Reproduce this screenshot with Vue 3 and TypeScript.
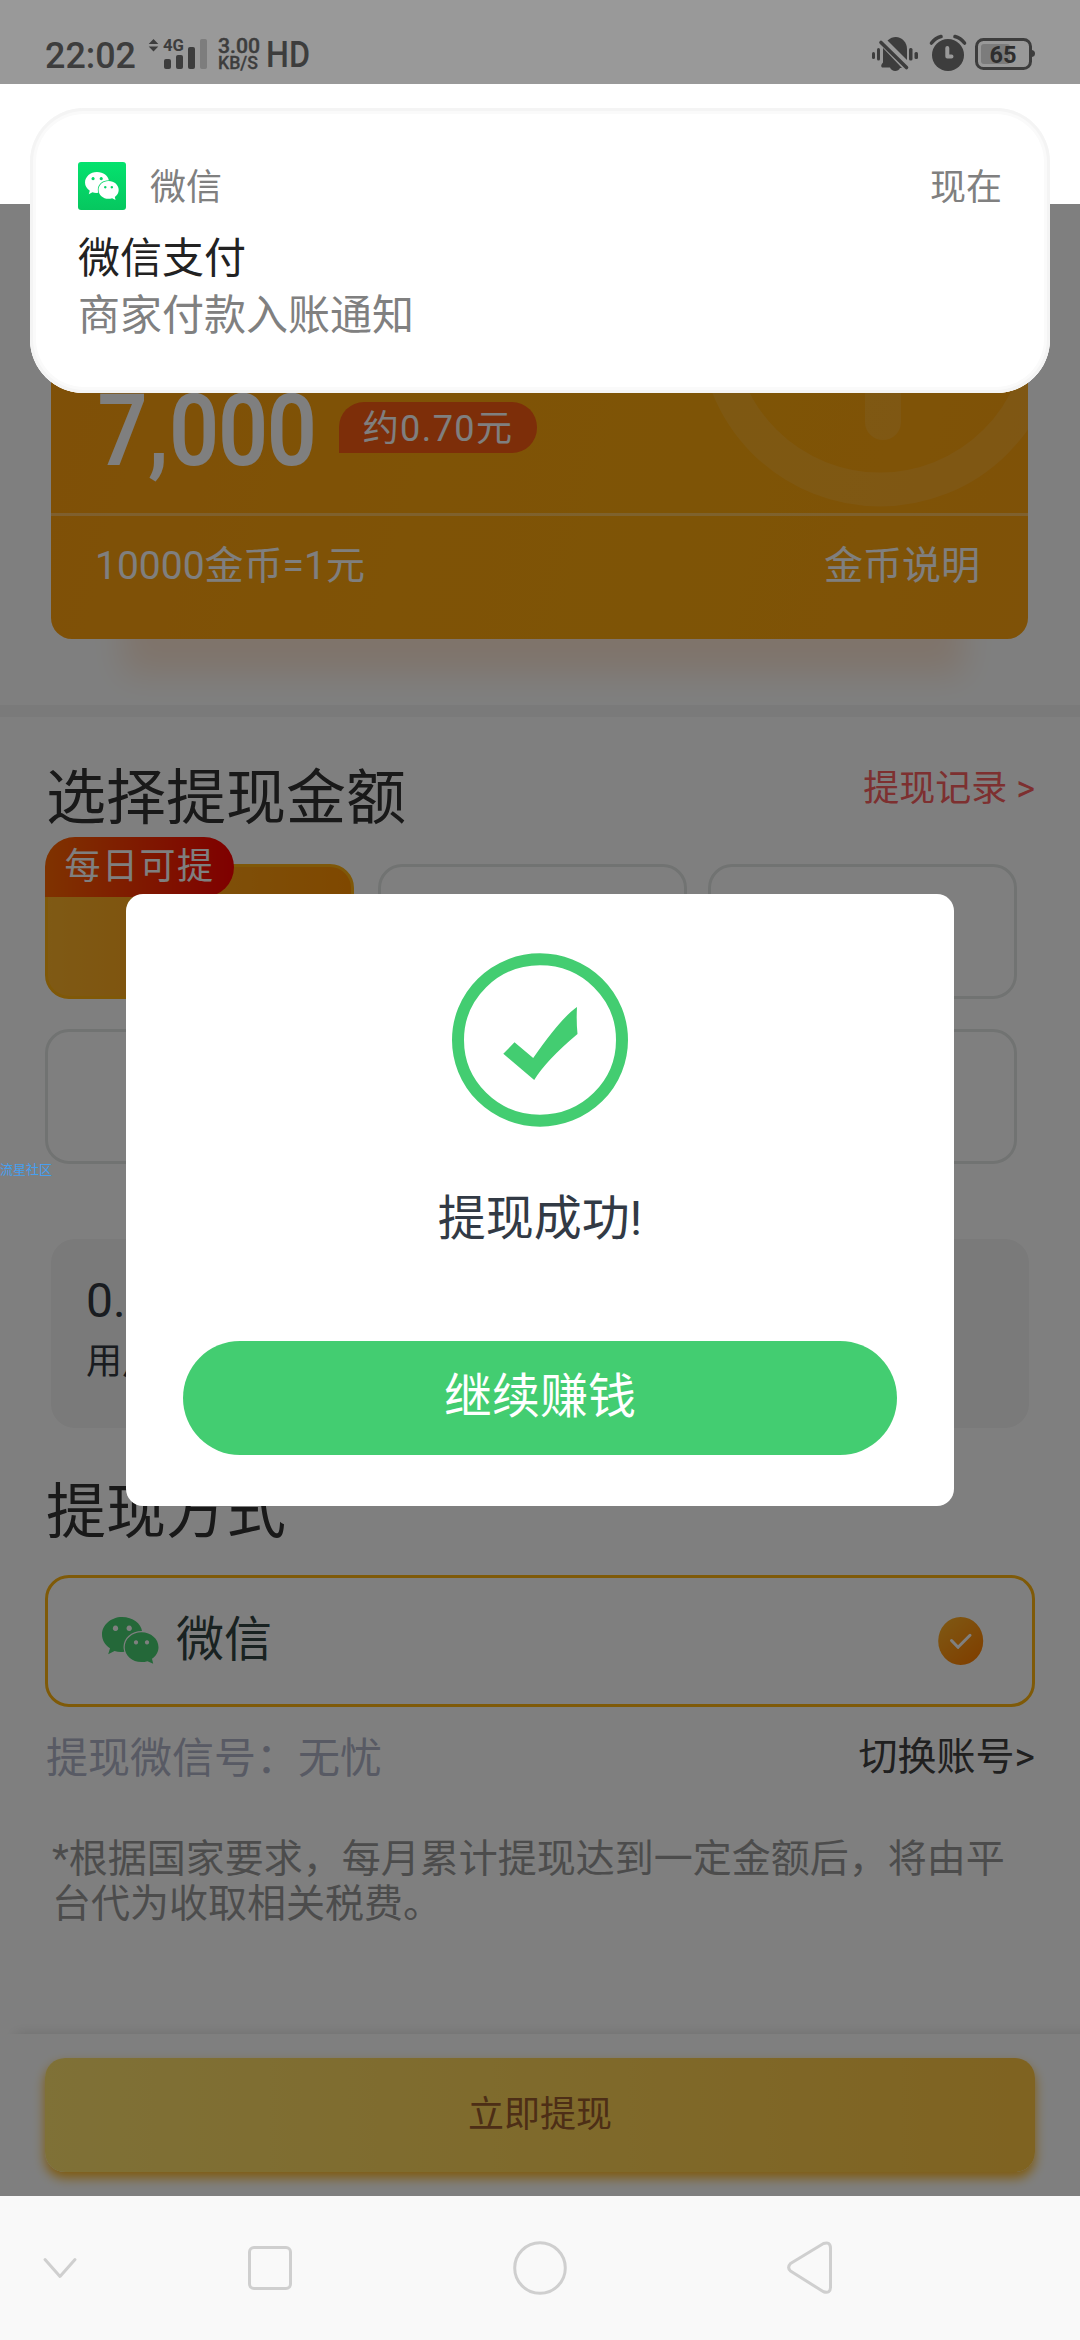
<script setup lang="ts">
import { ref } from 'vue'

interface AmountOption {
  id: number
  tag?: string
}

const amounts: AmountOption[] = [
  { id: 1, tag: '每日可提' },
  { id: 2 },
  { id: 3 },
  { id: 4 },
  { id: 5 },
  { id: 6 },
]
const selected = ref(1)
const dialogOpen = ref(true)
</script>

<template>
  <div class="screen">
    <header class="status">
      <svg class="status-left" width="280" height="44" viewBox="40 32 280 44">
        <g fill="#3d3d3d">
          <text x="45" y="67.500" font-size="36" font-weight="500" textLength="91" lengthAdjust="spacingAndGlyphs">22:02</text>
          <path d="M153.500 39l4.800 5h-9.600zM153.500 51.500l4.800-5h-9.600z" />
          <text x="163" y="51" font-size="17" font-weight="700" textLength="21" lengthAdjust="spacingAndGlyphs">4G</text>
          <rect x="164" y="59" width="7" height="10" rx="2" />
          <rect x="176" y="55" width="7" height="14" rx="2" />
          <rect x="188" y="47" width="7" height="22" rx="2" />
          <rect x="200" y="39" width="7" height="30" rx="2" fill="#7d7d7d" />
          <text x="218" y="53" font-size="20.500" font-weight="500" stroke="#3d3d3d" stroke-width=".4" textLength="42" lengthAdjust="spacingAndGlyphs">3.00</text>
          <text x="218" y="69" font-size="17.500" font-weight="500" stroke="#3d3d3d" stroke-width=".3" textLength="40" lengthAdjust="spacingAndGlyphs">KB/S</text>
          <text x="266" y="67" font-size="36" font-weight="500" textLength="44" lengthAdjust="spacingAndGlyphs">HD</text>
        </g>
      </svg>
      <svg class="status-right" width="170" height="44" viewBox="868 32 170 44">
        <g fill="#3d3d3d">
          <rect x="872" y="52" width="3" height="7" rx="1.500" />
          <rect x="877" y="48" width="3" height="12.500" rx="1.500" />
          <rect x="909" y="48" width="3.500" height="12.500" rx="1.500" />
          <rect x="914.500" y="52" width="3.500" height="7" rx="1.500" />
          <path d="M883 48L902 68H900C898.500 72 891.500 72 890 67.500H882Q880 65.500 883 62.500Z" />
          <path d="M887.500 40.500C896 32.500 907 39 907 49V60Z" />
          <path d="M881 42.500L906.500 67.500" stroke="#3d3d3d" stroke-width="3.600" stroke-linecap="round" />
          <circle cx="948" cy="55" r="16" />
          <path d="M931.500 43Q935.500 38 941 36.600M964.500 43Q960.500 38 955 36.600" fill="none" stroke="#3d3d3d" stroke-width="3.600" stroke-linecap="round" />
          <path d="M947.300 48V56.500H951.500" fill="none" stroke="#999" stroke-width="4" stroke-linecap="round" stroke-linejoin="round" />
          <rect x="976.500" y="39.500" width="54" height="29" rx="7" fill="none" stroke="#3d3d3d" stroke-width="3" />
          <path d="M1032 50Q1035 50.500 1035 53.500T1032 57Z" />
          <rect x="981" y="44" width="29" height="20" rx="3" fill="#7c7c7c" />
          <text x="989.500" y="62.500" font-size="24" font-weight="700" textLength="27" lengthAdjust="spacingAndGlyphs" fill="#2e2e2e">65</text>
        </g>
      </svg>
    </header>
    <div class="titlebar"></div>

    <main class="page">
      <section class="balance">
        <svg class="emblem" width="332" height="362" viewBox="0 0 332 362">
          <circle cx="184" cy="181" r="163.500" fill="none" stroke="#fff" stroke-opacity=".1" stroke-width="34" />
          <rect x="169" y="80" width="36" height="215" rx="18" fill="#fff" fill-opacity=".1" />
        </svg>
        <div class="balance-top">
          <svg class="coins" width="244" height="100" viewBox="0 0 244 100">
            <g transform="scale(.87 1)">
              <text x="3 61 85 141.500 197.500" y="85" font-size="101" font-weight="600" fill="#fff">7,000</text>
            </g>
          </svg>
          <span class="approx">约0.70元</span>
        </div>
        <div class="balance-foot">
          <span>10000金币=1元</span>
          <span>金币说明</span>
        </div>
      </section>

      <div class="divider"></div>

      <section class="amounts">
        <div class="row-head">
          <h2>选择提现金额</h2>
          <a class="records">提现记录 &gt;</a>
        </div>
        <div class="grid">
          <div v-for="a in amounts" :key="a.id" class="cell" :class="{ active: a.id === selected }">
            <span v-if="a.tag" class="tag">{{ a.tag }}</span>
          </div>
        </div>
      </section>

      <section class="info">
        <p class="info-sum">0.</p>
        <p class="info-who">用户</p>
      </section>

      <h2 class="method-title">提现方式</h2>
      <section class="method">
        <svg class="wechat" width="57" height="47" viewBox="0 0 57 47">
          <path fill="#48d072" fill-rule="evenodd" d="M20 0C31 0 39 6.500 40 14C29 14 21.500 21 21.500 30Q21.500 32.500 22.300 34.800Q17 35.600 12.500 33.900L6.200 37.300L8 31.300C3 28 0 23 0 17.500C0 8 9 0 20 0ZM13.500 8.600a2.700 2.700 0 1 0 .01 0ZM27.200 8.600a2.700 2.700 0 1 0 .01 0Z" />
          <path fill="#48d072" fill-rule="evenodd" d="M39.500 15.300C49 15.300 56.500 22 56.500 30.200C56.500 35 54 39 50 41.800L51.200 46.800L45.500 44.200Q42.500 45.100 39.500 45.100C30 45.100 22.700 38.500 22.700 30.200C22.700 22 30 15.300 39.500 15.300ZM34 23.300a2.100 2.100 0 1 0 .01 0ZM45 23.300a2.100 2.100 0 1 0 .01 0Z" />
        </svg>
        <span class="method-name">微信</span>
        <svg class="picked" width="46" height="48" viewBox="0 0 46 48">
          <defs>
            <linearGradient id="pick" x1="0" y1="0" x2=".8" y2="1">
              <stop offset="0" stop-color="#ffb429" />
              <stop offset="1" stop-color="#ff7e00" />
            </linearGradient>
          </defs>
          <ellipse cx="22.700" cy="24" rx="22.500" ry="24" fill="url(#pick)" />
          <path d="M13.500 23.500L20 30.300L32 18.300" fill="none" stroke="#fff" stroke-width="3" stroke-linecap="round" stroke-linejoin="round" />
        </svg>
      </section>
      <div class="account">
        <span class="account-name">提现微信号：无忧</span>
        <span class="account-switch">切换账号&gt;</span>
      </div>
      <p class="note">*根据国家要求，每月累计提现达到一定金额后，将由平<br />台代为收取相关税费。</p>

      <footer class="submit-bar">
        <button class="submit">立即提现</button>
      </footer>

      <div v-if="dialogOpen" class="mask">
        <div class="dialog">
          <svg class="success" width="176" height="174" viewBox="0 0 176 174">
            <ellipse cx="88" cy="87" rx="82" ry="80.700" fill="none" stroke="#43cd71" stroke-width="12" />
            <path fill="#43cd71" d="M62.500 89.300L51.300 100.700L82.200 127Q94 107.500 125.500 81Q124.200 67.500 125 54Q109 65 81.200 105Z" />
          </svg>
          <p class="dialog-text">提现成功!</p>
          <button class="dialog-btn">继续赚钱</button>
        </div>
      </div>
      <span class="stamp">流星社区</span>
    </main>

    <nav class="nav">
      <span class="nav-side"><svg width="36" height="22" viewBox="0 0 36 22"><path d="M3 2.500L18 19.500L33 2.500" /></svg></span>
      <span class="nav-wide"><svg width="44" height="44" viewBox="0 0 44 44"><rect x="1.500" y="1.500" width="41" height="41" rx="4.500" /></svg></span>
      <span class="nav-mid"><svg width="54" height="54" viewBox="0 0 54 54"><circle cx="27" cy="27" r="25.300" /></svg></span>
      <span class="nav-wide"><svg width="46" height="54" viewBox="0 0 46 54"><path d="M36.500 2.500L3.500 22.500Q-.2 26.500 3.500 30L36.500 50.800Q43.300 53 43.500 46.500V7Q43.300 .2 36.500 2.500Z" /></svg></span>
    </nav>

    <aside class="notice">
      <div class="notice-head">
        <span class="notice-icon">
          <svg width="34" height="28" viewBox="0 0 57 47">
            <path fill="#fff" fill-rule="evenodd" d="M20 0C31 0 39 6.500 40 14C29 14 21.500 21 21.500 30Q21.500 32.500 22.300 34.800Q17 35.600 12.500 33.900L6.200 37.300L8 31.300C3 28 0 23 0 17.500C0 8 9 0 20 0ZM13.500 8.600a2.700 2.700 0 1 0 .01 0ZM27.200 8.600a2.700 2.700 0 1 0 .01 0Z" />
            <path fill="#fff" fill-rule="evenodd" d="M39.500 15.300C49 15.300 56.500 22 56.500 30.200C56.500 35 54 39 50 41.800L51.200 46.800L45.500 44.200Q42.500 45.100 39.500 45.100C30 45.100 22.700 38.500 22.700 30.200C22.700 22 30 15.300 39.500 15.300ZM34 23.300a2.100 2.100 0 1 0 .01 0ZM45 23.300a2.100 2.100 0 1 0 .01 0Z" />
          </svg>
        </span>
        <span class="notice-app">微信</span>
        <span class="notice-time">现在</span>
      </div>
      <p class="notice-title">微信支付</p>
      <p class="notice-body">商家付款入账通知</p>
    </aside>
  </div>
</template>

<style>
body {
  margin: 0;
}
</style>

<style scoped>
.screen {
  position: relative;
  display: flex;
  flex-direction: column;
  width: 1080px;
  height: 2340px;
  overflow: hidden;
  background: #fff;
  font-family: Roboto, "Noto Sans CJK SC", sans-serif;
}
.screen * {
  box-sizing: border-box;
}
svg {
  display: block;
  flex: none;
}
h2,
p {
  margin: 0;
  font-weight: 400;
}
button {
  border: 0;
  padding: 0;
  font-family: inherit;
}
.status {
  display: flex;
  justify-content: space-between;
  height: 84px;
  flex: none;
  padding: 32px 42px 0 40px;
  background: #999;
}
.titlebar {
  height: 120px;
  flex: none;
  background: #fff;
}
.page {
  position: relative;
  display: flex;
  flex-direction: column;
  height: 1992px;
  flex: none;
  overflow: hidden;
  background: #fff;
}

.balance {
  position: relative;
  display: flex;
  flex-direction: column;
  flex: none;
  width: 977px;
  height: 411px;
  margin: 24px 0 0 51px;
  border-radius: 21px;
  background: linear-gradient(105deg, #ffa010 0%, #fea60c 40%, #fda90c 65%, #ffa410 100%);
  box-shadow: 4px 103px 32px -68px #ffe8d6;
}
.emblem {
  position: absolute;
  right: 0;
  top: -83px;
}
.balance-top {
  display: flex;
  align-items: flex-start;
  height: 285px;
  padding: 152px 0 0 44px;
}
.coins {
  overflow: visible;
}
.approx {
  width: 198px;
  height: 51px;
  margin-top: 22px;
  border-radius: 25px 25px 25px 0;
  background: #fa5c12;
  color: #fff;
  font-size: 36px;
  line-height: 54px;
  letter-spacing: 1.4px;
  text-align: center;
}
.balance-foot {
  display: flex;
  justify-content: space-between;
  width: 978px;
  height: 126px;
  padding: 0 49px 0 44px;
  border-top: 3px solid rgba(255, 255, 255, 0.32);
  color: #fff;
  font-size: 39px;
  line-height: 101px;
}

.divider {
  flex: none;
  height: 12px;
  margin-top: 66px;
  background: #f5f5f5;
}
.row-head {
  display: flex;
  justify-content: space-between;
  align-items: flex-start;
  height: 147px;
  padding: 52px 45px 0 46px;
}
h2 {
  color: #333;
  font-size: 60px;
  line-height: 60px;
}
.records {
  margin-top: 2px;
  color: #fa6060;
  font-size: 36px;
  line-height: 37px;
}
.grid {
  display: grid;
  grid-template-columns: 312px 309px 309px;
  grid-auto-rows: 135px;
  gap: 30px 21px;
  padding-left: 45px;
}
.cell {
  position: relative;
  width: 309px;
  border: 3px solid #e3e6e5;
  border-radius: 24px;
}
.cell.active {
  border-color: #ffb010;
  background: linear-gradient(90deg, #ffb42a, #ff9000) border-box;
}
.tag {
  position: absolute;
  left: -3px;
  top: -30px;
  width: 189px;
  height: 60px;
  border-radius: 30px 30px 30px 0;
  background: linear-gradient(90deg, #ff6600, #ff0000);
  color: #fff;
  font-size: 36px;
  line-height: 61px;
  letter-spacing: 1.5px;
  text-align: center;
}

.info {
  flex: none;
  width: 978px;
  height: 189px;
  margin: 75px 0 0 51px;
  padding: 38px 0 0 35px;
  border-radius: 24px;
  background: #f4f4f4;
  color: #323840;
}
.info-sum {
  font-size: 48px;
  line-height: 48px;
}
.info-who {
  margin-top: 19px;
  font-size: 36px;
  line-height: 36px;
}
.method-title {
  margin: 55px 0 0 46px;
}
.method {
  display: flex;
  align-items: center;
  flex: none;
  width: 990px;
  height: 132px;
  margin: 32px 0 0 45px;
  padding: 0 48px 0 54px;
  border: 3px solid #ffb410;
  border-radius: 24px;
}
.wechat {
  margin-top: -2px;
}
.method-name {
  margin: -3px 0 0 17px;
  flex: 1;
  color: #324442;
  font-size: 48px;
  line-height: 60px;
}
.account {
  display: flex;
  justify-content: space-between;
  align-items: flex-start;
  margin: 31px 45px 0 46px;
}
.account-name {
  color: #b0b4c8;
  font-size: 42px;
  line-height: 42px;
}
.account-switch {
  color: #404040;
  font-size: 39px;
  line-height: 39px;
}
.note {
  margin: 57px 0 0 52px;
  color: #999;
  font-size: 39px;
  line-height: 45px;
  white-space: nowrap;
}
.submit-bar {
  flex: none;
  height: 162px;
  margin-top: auto;
  padding: 24px 45px 0;
  background: #fff;
  box-shadow: 15px 0 12px rgba(0, 0, 0, 0.14);
}
.submit {
  display: block;
  width: 990px;
  height: 114px;
  border-radius: 20px;
  background: linear-gradient(90deg, #ffe26e, #fed65a 45%, #ffc642);
  box-shadow: 0 6px 12px #ffb61e;
  color: #9a5c2c;
  font-size: 36px;
  line-height: 114px;
}

.mask {
  position: absolute;
  inset: 0;
  display: flex;
  align-items: center;
  justify-content: center;
  background: rgba(0, 0, 0, 0.5);
}
.dialog {
  display: flex;
  flex-direction: column;
  align-items: center;
  width: 828px;
  height: 612px;
  padding-top: 59px;
  border-radius: 17px;
  background: #fff;
}
.dialog-text {
  margin-top: 68px;
  color: #323a45;
  font-size: 48px;
  line-height: 48px;
}
.dialog-btn {
  width: 714px;
  height: 114px;
  margin-top: 98px;
  border-radius: 57px;
  background: #43cd71;
  color: #fff;
  font-size: 48px;
  line-height: 110px;
  padding-bottom: 3px;
}
.stamp {
  position: absolute;
  left: 0;
  top: 959px;
  color: #459ff0;
  font-size: 13px;
  line-height: 14px;
}

.nav {
  display: flex;
  align-items: center;
  height: 144px;
  flex: none;
  background: #f9f9f9;
}
.nav span {
  display: flex;
  justify-content: center;
}
.nav svg {
  fill: none;
  stroke: #cfcfcf;
  stroke-width: 3;
  stroke-linecap: round;
  stroke-linejoin: round;
}
.nav-side {
  width: 120px;
}
.nav-wide {
  width: 300px;
}
.nav-mid {
  width: 240px;
}

.notice {
  position: absolute;
  left: 30px;
  top: 108px;
  width: 1020px;
  height: 285px;
  padding: 54px 48px 0;
  border-radius: 54px;
  background: #fff;
  box-shadow: inset 0 0 0 3px #f4f4f4, inset 0 0 0 6px #fafafa;
}
.notice-head {
  display: flex;
  align-items: center;
  height: 48px;
  color: #808080;
  font-size: 36px;
  line-height: 48px;
}
.notice-icon {
  display: flex;
  align-items: center;
  justify-content: center;
  width: 48px;
  height: 48px;
  border-radius: 3px;
  background: linear-gradient(#04e26e, #06c75f);
}
.notice-app {
  flex: 1;
  margin-left: 24px;
  padding-top: 4px;
}
.notice-time {
  padding-top: 4px;
}
.notice-title {
  margin-top: 28px;
  color: #222;
  font-size: 42px;
  line-height: 42px;
}
.notice-body {
  margin-top: 15px;
  color: #808080;
  font-size: 42px;
  line-height: 42px;
}
</style>
